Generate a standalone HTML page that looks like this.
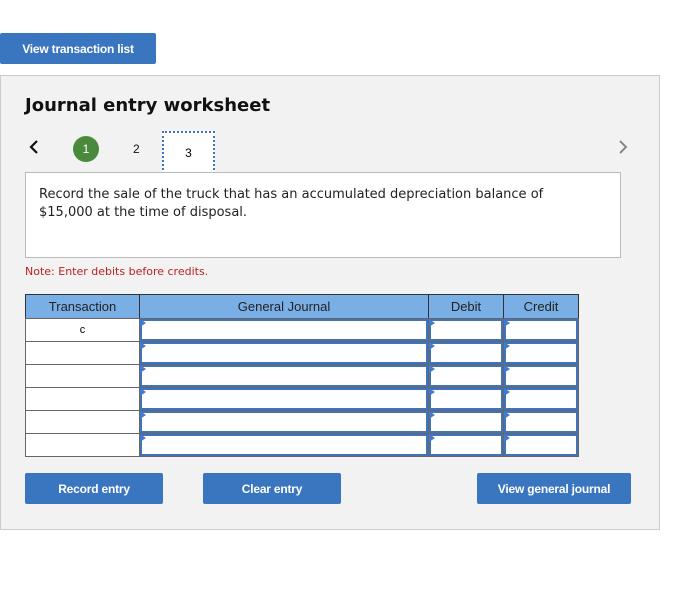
<!DOCTYPE html>
<html><head><style>
*{box-sizing:border-box;margin:0;padding:0}
body{width:688px;height:613px;background:#fff;font-family:"Liberation Sans",Arial,sans-serif;position:relative;overflow:hidden}
.a{position:absolute}
.btn{position:absolute;background:#3a75c0;color:#fff;font-weight:bold;font-size:12px;display:flex;align-items:center;justify-content:center;border-radius:2px;letter-spacing:-0.2px}
.cell{position:absolute;background:#fff;border:1px solid #666}
.inp{position:absolute;background:#fff;border:2px solid #4273b8}
.tri{position:absolute;width:0;height:0;border-top:4px solid transparent;border-bottom:4px solid transparent;border-left:6px solid #3f7bd0}
.hd{position:absolute;background:#7aafe6;border:1px solid #333;font-size:13px;color:#222;display:flex;align-items:center;justify-content:center;top:294px;height:25px}
.dv{font-family:"DejaVu Sans",Verdana,sans-serif}
</style></head><body>
<div class="btn" style="left:0;top:33px;width:156px;height:31px">View transaction list</div>
<div class="a" style="left:0;top:75px;width:660px;height:455px;background:#f2f2f2;border:1px solid #ccc"></div>
<div class="a dv" style="left:25px;top:95px;font-size:18px;font-weight:bold;color:#111">Journal entry worksheet</div>
<svg class="a" style="left:28px;top:139px" width="12" height="16"><path d="M9 2 L3 8 L9 14" stroke="#111" stroke-width="2.2" fill="none"/></svg>
<div class="a" style="left:73px;top:136px;width:26px;height:26px;border-radius:50%;background:#4b8a3c;color:#fff;font-size:12px;display:flex;align-items:center;justify-content:center">1</div>
<div class="a" style="left:133px;top:142px;font-size:12px;color:#111">2</div>
<div class="a" style="left:162px;top:131px;width:53px;height:43px;background:#fff;border:2px dotted #3a75c0;font-size:12px;display:flex;align-items:center;justify-content:center">3</div>
<svg class="a" style="left:617px;top:139px" width="12" height="16"><path d="M3 2 L9 8 L3 14" stroke="#888" stroke-width="2" fill="none"/></svg>
<div class="a dv" style="left:25px;top:172px;width:596px;height:86px;background:#fff;border:1px solid #bbb;padding:13px 13px;font-size:13px;line-height:18px;color:#222"><div style="width:540px">Record the sale of the truck that has an accumulated depreciation balance of $15,000 at the time of disposal.</div></div>
<div class="a dv" style="left:25px;top:265px;font-size:11px;color:#b22">Note: Enter debits before credits.</div>
<div class="hd" style="left:25px;width:115px">Transaction</div>
<div class="hd" style="left:139px;width:290px">General Journal</div>
<div class="hd" style="left:428px;width:76px">Debit</div>
<div class="hd" style="left:503px;width:76px">Credit</div>
<div id="rows"></div>
<script>
var h='';for(var i=0;i<6;i++){var y=318+i*23;
h+='<div class="cell" style="left:25px;top:'+y+'px;width:115px;height:24px;font-size:11px;display:flex;align-items:center;justify-content:center">'+(i==0?'c':'')+'</div>';
[[139,290],[428,76],[503,76]].forEach(function(c){h+='<div class="cell" style="left:'+c[0]+'px;top:'+y+'px;width:'+c[1]+'px;height:24px"></div><div class="inp" style="left:'+(c[0]+1)+'px;top:'+(y+1)+'px;width:'+(c[1]-2)+'px;height:22px"></div><div class="tri" style="left:'+(c[0]+1)+'px;top:'+(y+1)+'px"></div>';});}
document.getElementById('rows').innerHTML=h;
</script>
<div class="btn" style="left:25px;top:473px;width:138px;height:31px">Record entry</div>
<div class="btn" style="left:203px;top:473px;width:138px;height:31px">Clear entry</div>
<div class="btn" style="left:477px;top:473px;width:154px;height:31px">View general journal</div>
</body></html>
